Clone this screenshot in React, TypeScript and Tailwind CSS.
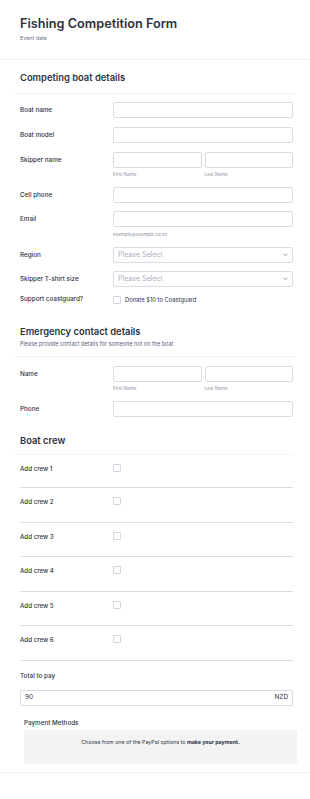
import React from "react";

const Chevron = () => (
  <svg width="5" height="4" viewBox="0 0 5 4" className="shrink-0">
    <path d="M0.8 1 L2.5 2.7 L4.2 1" fill="none" stroke="#8a91a3" strokeWidth="0.9" />
  </svg>
);

const Input = ({ className = "" }: { className?: string }) => (
  <div className={`h-[16px] rounded-[2px] border border-[#d9dce3] bg-white ${className}`} />
);

const Label = ({ children }: { children: React.ReactNode }) => (
  <div className="w-[93px] shrink-0 text-[6.3px] leading-[16px] font-medium text-[#2c3345]">{children}</div>
);

const Sub = ({ children }: { children: React.ReactNode }) => (
  <div className="text-[4.6px] leading-[6px] text-[#8d94a5]">{children}</div>
);

const Select = () => (
  <div className="flex h-[16px] w-[180px] shrink-0 items-center justify-between rounded-[2px] border border-[#d9dce3] bg-white pl-[4px] pr-[4px]">
    <span className="text-[7px] text-[#a9b0c0]">Please Select</span>
    <Chevron />
  </div>
);

const Checkbox = () => (
  <div className="h-[8px] w-[8px] shrink-0 rounded-[1px] border border-[#d3d6de] bg-white" />
);

const CrewRow = ({ n, h }: { n: number; h: string }) => (
  <div className={`flex w-[273px] items-start border-b border-[#dcdde2] pt-[9px] ${h}`}>
    <div className="w-[93px] shrink-0 text-[6.2px] leading-[9px] font-medium text-[#2c3345]">Add crew {n}</div>
    <Checkbox />
  </div>
);

export default function App() {
  return (
    <div className="min-h-[799px] w-[310px] bg-white font-['Inter',sans-serif] text-[#2c3345]">
      {/* Header */}
      <div className="h-[60px] border-b border-[#eceef1] px-[20px] pt-[16px]">
        <div className="text-[12.7px] leading-[16px] font-semibold text-[#2c3345]">Fishing Competition Form</div>
        <div className="mt-[2px] text-[5.4px] leading-[8px] text-[#6c738a]">Event date</div>
      </div>

      {/* Competing boat details */}
      <div className="mx-[15px] h-[34px] border-b border-[#eef0f3] pl-[5px] pt-[12px]">
        <div className="text-[9.4px] leading-[12px] font-semibold text-[#2c3345]">Competing boat details</div>
      </div>

      <div className="px-[20px]">
        <div className="mt-[8px] flex">
          <Label>Boat name</Label>
          <Input className="w-[180px] shrink-0" />
        </div>
        <div className="mt-[9px] flex">
          <Label>Boat model</Label>
          <Input className="w-[180px] shrink-0" />
        </div>
        <div className="mt-[9px] flex">
          <Label>Skipper name</Label>
          <div className="flex w-[180px] shrink-0 gap-[3px]">
            <div className="flex-1">
              <Input />
              <div className="mt-[4px]"><Sub>First Name</Sub></div>
            </div>
            <div className="flex-1">
              <Input />
              <div className="mt-[4px]"><Sub>Last Name</Sub></div>
            </div>
          </div>
        </div>
        <div className="mt-[9px] flex">
          <Label>Cell phone</Label>
          <Input className="w-[180px] shrink-0" />
        </div>
        <div className="mt-[8px] flex">
          <Label>Email</Label>
          <div className="w-[180px] shrink-0">
            <Input />
            <div className="mt-[5px]"><Sub>example@example.co.nz</Sub></div>
          </div>
        </div>
        <div className="mt-[9px] flex">
          <Label>Region</Label>
          <Select />
        </div>
        <div className="mt-[8px] flex">
          <Label>Skipper T-shirt size</Label>
          <Select />
        </div>
        <div className="mt-[8px] flex h-[10px] items-center">
          <div className="w-[93px] shrink-0 text-[6.3px] font-medium text-[#2c3345]">Support coastguard?</div>
          <Checkbox />
          <span className="ml-[4px] text-[5.8px] text-[#2c3345]">Donate $10 to Coastguard</span>
        </div>
      </div>

      {/* Emergency contact */}
      <div className="mx-[15px] mt-[21px] h-[31px] border-b border-[#eef0f3] pl-[5px]">
        <div className="text-[9.4px] leading-[12px] font-semibold text-[#2c3345]">Emergency contact details</div>
        <div className="mt-[3px] text-[5.5px] leading-[7px] text-[#57647e]">Please provide contact details for someone not on the boat</div>
      </div>

      <div className="px-[20px]">
        <div className="mt-[9px] flex">
          <Label>Name</Label>
          <div className="flex w-[180px] shrink-0 gap-[3px]">
            <div className="flex-1">
              <Input />
              <div className="mt-[4px]"><Sub>First Name</Sub></div>
            </div>
            <div className="flex-1">
              <Input />
              <div className="mt-[4px]"><Sub>Last Name</Sub></div>
            </div>
          </div>
        </div>
        <div className="mt-[9px] flex">
          <Label>Phone</Label>
          <Input className="w-[180px] shrink-0" />
        </div>
      </div>

      {/* Boat crew */}
      <div className="mx-[15px] mt-[18px] h-[20px] border-b border-[#f4f5f7] pl-[5px]">
        <div className="text-[9.4px] leading-[12px] font-semibold text-[#2c3345]">Boat crew</div>
      </div>

      <div className="px-[20px]">
        <CrewRow n={1} h="h-[33px]" />
        <CrewRow n={2} h="h-[34.5px]" />
        <CrewRow n={3} h="h-[34.5px]" />
        <CrewRow n={4} h="h-[34.5px]" />
        <CrewRow n={5} h="h-[34.5px]" />
        <CrewRow n={6} h="h-[34.5px]" />

        <div className="mt-[11px] text-[6.3px] leading-[8px] font-medium text-[#2c3345]">Total to pay</div>
        <div className="mt-[10px] flex h-[16px] w-[273px] items-center justify-between rounded-[2px] border border-[#d9dce3] px-[4px]">
          <span className="text-[6.4px] text-[#2c3345]">90</span>
          <span className="text-[6.4px] text-[#2c3345]">NZD</span>
        </div>
      </div>

      <div className="px-[24px]">
        <div className="mt-[13px] text-[6.3px] leading-[8px] font-medium text-[#2c3345]">Payment Methods</div>
        <div className="mt-[3px] h-[34px] w-[273px] rounded-[2px] bg-[#f3f3f4] pt-[8px] text-center text-[5.3px] leading-[8px] text-[#2c3345]">
          Choose from one of the PayPal options to <span className="font-bold">make your payment.</span>
        </div>
      </div>

      <div className="mt-[8px] border-t border-[#eceef1]" />
    </div>
  );
}
